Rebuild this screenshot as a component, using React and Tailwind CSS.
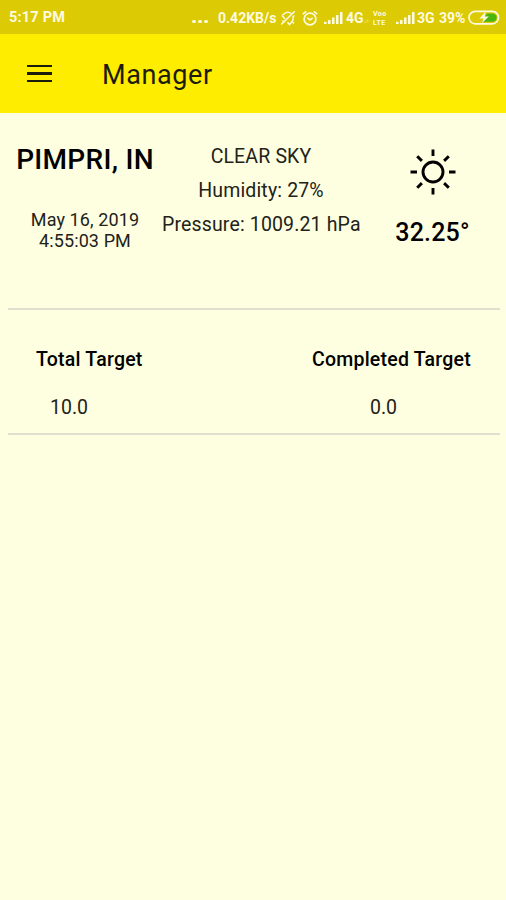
function SignalBars() {
  return (
    <svg width="19" height="14" viewBox="0 0 19 14" fill="currentColor">
      <rect x="0" y="10.800" width="2.600" height="2.200" />
      <rect x="4" y="9" width="2.500" height="4" />
      <rect x="8" y="6.500" width="2.500" height="6.500" />
      <rect x="12" y="4" width="2.500" height="9" />
      <rect x="16" y="1" width="2.500" height="12" />
    </svg>
  );
}

function MutedBell() {
  return (
    <svg width="16" height="16" viewBox="0 0 16 16" fill="none" stroke="currentColor" strokeWidth="1.5">
      <path d="M2 5.500 4.500 3.500C7 1.500 9.500 2 11.500 3.800M14.500 5.500l-1.500 1.200c.6 2.500 0 4.600-2.200 6.300l-1.300 1.500-2-2.200M2 5.500 5 9" />
      <path d="M1.200 14.500 14.800 1.200M2.500 10.500l2 2M12.500 12l1.500 1.500" />
    </svg>
  );
}

function AlarmClock() {
  return (
    <svg width="16" height="16" viewBox="0 0 16 16" fill="none" stroke="currentColor" strokeWidth="1.7">
      <circle cx="8" cy="9" r="5.900" />
      <path d="M5.300 7.800 8 10l2.700-2.200M.8 4.200 4.200 1.400M15.200 4.200l-3.400-2.800" />
    </svg>
  );
}

function Battery() {
  return (
    <svg width="32" height="16" viewBox="0 0 32 16" fill="none">
      <rect x="1" y="1.300" width="29.500" height="12.500" rx="6.200" stroke="currentColor" strokeWidth="1.700" />
      <path d="M19 3.400h5.500a4.200 4.200 0 0 1 0 8.400H14z" fill="#4bb510" />
      <path d="M17.500 1.800 11.500 8.500h4l-1.700 4.800 7-6.700h-4.200z" fill="currentColor" />
    </svg>
  );
}

function SunIcon() {
  return (
    <svg width="48" height="48" viewBox="0 0 48 48" fill="none" stroke="#000" strokeWidth="2.900">
      <circle cx="24" cy="24" r="10" />
      <path d="M24 1.500v6.500M24 40v6.500M1.500 24H8M40 24h6.500M8.200 8.200l4.700 4.700M35.100 35.100l4.700 4.700M8.200 39.800l4.700-4.700M35.100 12.900l4.700-4.700" />
    </svg>
  );
}

export default function App() {
  return (
    <div className="w-[506px] h-[900px] bg-[#feffe0] text-black overflow-hidden font-['Roboto',sans-serif]">
      <div className="flex items-center h-[34px] pt-[2px] pl-[9px] pr-[5px] bg-[#dbca04] text-[#fffbe0] text-[14px] font-bold whitespace-nowrap">
        <span className="w-[183px] text-[14.500px] tracking-[0.2px]">5:17 PM</span>
        <div className="flex gap-[2.500px] w-[26px] pt-[7px]">
          <i className="size-[3.500px] rounded-full bg-current" />
          <i className="size-[3.500px] rounded-full bg-current" />
          <i className="size-[3.500px] rounded-full bg-current" />
        </div>
        <span className="w-[62px] text-[14px]">0.42KB/s</span>
        <div className="w-[22px]"><MutedBell /></div>
        <div className="w-[22px]"><AlarmClock /></div>
        <div className="w-[22px]"><SignalBars /></div>
        <span className="w-[18px]">4G</span>
        <span className="w-[9px] pt-[7px] text-[5px]">↓↑</span>
        <div className="flex flex-col gap-px w-[23px] text-[7px] tracking-[0.4px]">
          <span className="h-[8px] leading-[8px]">Voo</span>
          <span className="h-[8px] leading-[8px]">LTE</span>
        </div>
        <div className="w-[21px]"><SignalBars /></div>
        <span className="w-[22px]">3G</span>
        <span className="w-[29px]">39%</span>
        <Battery />
      </div>

      <header className="flex items-center h-[79px] pl-[27px] bg-[#ffed00]">
        <div className="flex flex-col gap-[5px] w-[75px]">
          <i className="w-[25px] h-[2.500px] bg-[#1c1c0c]" />
          <i className="w-[25px] h-[2.500px] bg-[#1c1c0c]" />
          <i className="w-[25px] h-[2.500px] bg-[#1c1c0c]" />
        </div>
        <h1 className="pt-[3px] text-[27px] text-[#1c1c0c] tracking-[0.6px]">Manager</h1>
      </header>

      <section className="flex h-[197px] ml-2 mr-[6px] border-b-2 border-[#e0e0d0] text-center whitespace-nowrap">
        <div className="w-[154px] pt-[31px]">
          <h2 className="text-[28px] leading-[32px] font-medium tracking-[0.3px]">PIMPRI, IN</h2>
          <p className="mt-[33px] text-[18px] leading-[21px] tracking-[0.1px] text-[#22221a]">
            May 16, 2019
            <br />
            4:55:03 PM
          </p>
        </div>
        <div className="w-[198px] pt-[27px] text-[19.500px] leading-[34px] tracking-[0.150px] text-[#22221a]">
          <p>CLEAR SKY</p>
          <p>Humidity: 27%</p>
          <p>Pressure: 1009.21 hPa</p>
        </div>
        <div className="flex flex-col items-center w-[140px] pt-[35px] pl-[5px]">
          <SunIcon />
          <p className="mt-[22px] text-[25px] leading-[30px] font-medium tracking-[0.2px]">32.25°</p>
        </div>
      </section>

      <section className="h-[125px] ml-2 mr-[6px] border-b-2 border-[#e0e0d0] text-[19.500px] whitespace-nowrap">
        <div className="flex justify-between h-[62px] pt-[38px] pl-7 pr-[29px] leading-[24px] font-medium tracking-[0.230px]">
          <span>Total Target</span>
          <span>Completed Target</span>
        </div>
        <div className="flex justify-between pt-[24px] pl-[42px] pr-[103px] leading-[24px] text-[#22221a]">
          <span>10.0</span>
          <span>0.0</span>
        </div>
      </section>
    </div>
  );
}
